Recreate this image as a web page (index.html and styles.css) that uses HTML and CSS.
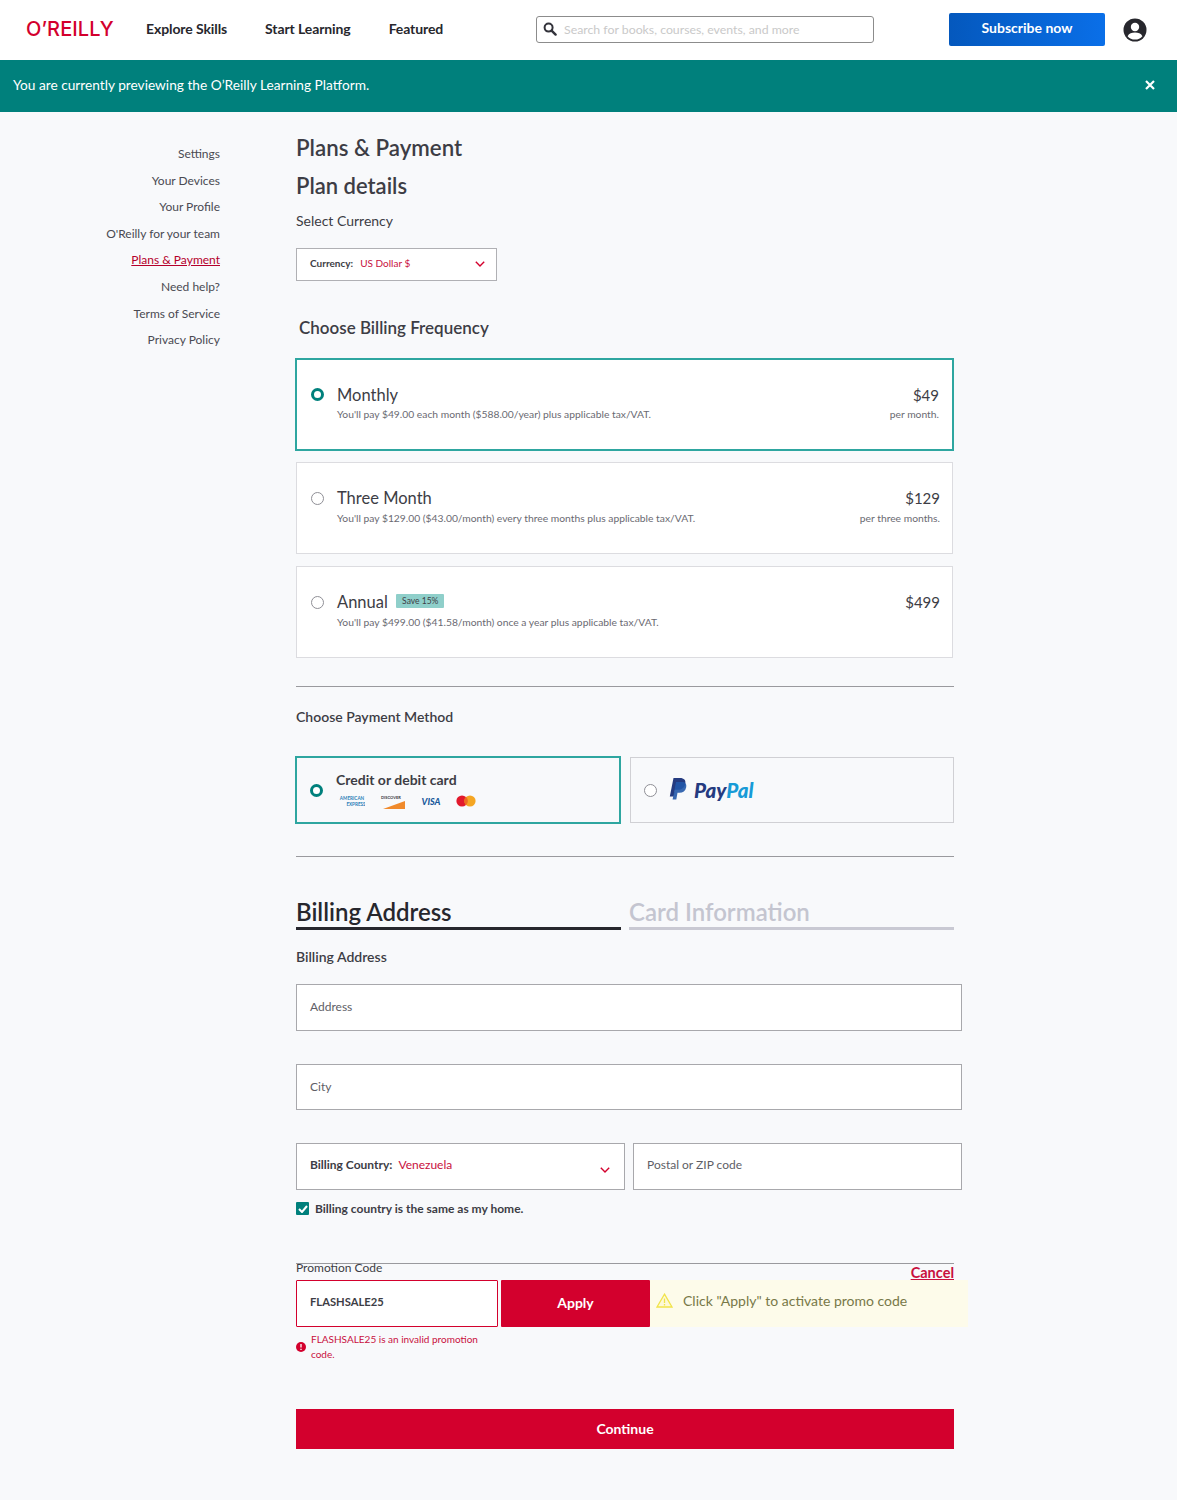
FILE: index.html
```html
<!DOCTYPE html>
<html lang="en">
<head>
    <meta charset="UTF-8">
    <meta name="viewport" content="width=device-width, initial-scale=1.0">
    <title>Plans &amp; Payment</title>
    <link rel="stylesheet" href="styles.css">
</head>
<body>
    <header class="topbar">
        <a class="logo">O’REILLY</a>
        <nav class="topnav">
            <a>Explore Skills</a>
            <a>Start Learning</a>
            <a>Featured</a>
        </nav>
        <div class="search">
            <svg width="14" height="14" viewBox="0 0 14 14"><circle cx="5.6" cy="5.6" r="4" fill="none" stroke="#33333b" stroke-width="2"/><path d="M8.6 8.6l4 4" stroke="#33333b" stroke-width="2.4" stroke-linecap="round"/></svg>
            <span>Search for books, courses, events, and more</span>
        </div>
        <button class="subscribe">Subscribe now</button>
        <svg class="avatar" width="24" height="24" viewBox="0 0 24 24"><circle cx="12" cy="12" r="11.5" fill="#27272d"/><circle cx="12" cy="9" r="4.2" fill="#fff"/><path d="M4.6 18.2c1.6-2.8 4-3.6 7.4-3.6s5.800.8 7.400 3.600c-1.800 2.200-4.400 3.400-7.400 3.400s-5.600-1.200-7.400-3.400z" fill="#fff"/></svg>
    </header>

    <div class="banner">
        <span>You are currently previewing the O’Reilly Learning Platform.</span>
        <svg class="banner-close" width="10" height="10" viewBox="0 0 10 10"><path d="M1 1l8 8M9 1l-8 8" stroke="#fff" stroke-width="2.200"/></svg>
    </div>

    <div class="layout">
        <aside class="sidenav">
            <a>Settings</a>
            <a>Your Devices</a>
            <a>Your Profile</a>
            <a>O'Reilly for your team</a>
            <a class="current">Plans &amp; Payment</a>
            <a>Need help?</a>
            <a>Terms of Service</a>
            <a>Privacy Policy</a>
        </aside>

        <main class="content">
            <h1>Plans &amp; Payment</h1>
            <h2>Plan details</h2>
            <p class="label currency-label">Select Currency</p>
            <div class="select currency-select">
                <b>Currency:</b><span class="red">US Dollar $</span>
                <svg class="chev" width="10" height="6" viewBox="0 0 10 6"><path d="M.8.8L5 5l4.200-4.200" fill="none" stroke="#d3002d" stroke-width="1.400"/></svg>
            </div>

            <h3 class="freq-title">Choose Billing Frequency</h3>

            <div class="plan selected">
                <i class="radio on"></i>
                <div class="plan-info">
                    <div class="plan-name">Monthly</div>
                    <div class="plan-desc">You'll pay $49.00 each month ($588.00/year) plus applicable tax/VAT.</div>
                </div>
                <div class="plan-price">$49<small>per month.</small></div>
            </div>
            <div class="plan">
                <i class="radio"></i>
                <div class="plan-info">
                    <div class="plan-name">Three Month</div>
                    <div class="plan-desc">You'll pay $129.00 ($43.00/month) every three months plus applicable tax/VAT.</div>
                </div>
                <div class="plan-price">$129<small>per three months.</small></div>
            </div>
            <div class="plan">
                <i class="radio"></i>
                <div class="plan-info">
                    <div class="plan-name">Annual <span class="save">Save 15%</span></div>
                    <div class="plan-desc">You'll pay $499.00 ($41.58/month) once a year plus applicable tax/VAT.</div>
                </div>
                <div class="plan-price">$499</div>
            </div>

            <hr class="rule rule-one">
            <p class="label method-label">Choose Payment Method</p>

            <div class="methods">
                <div class="method selected">
                    <i class="radio on"></i>
                    <div>
                        <div class="method-name">Credit or debit card</div>
                        <div class="cards">
                            <svg width="26" height="10" viewBox="0 0 26 10"><text x="13" y="4" text-anchor="middle" class="amex">AMERICAN</text><text x="17" y="9.500" text-anchor="middle" class="amex">EXPRESS</text></svg>
                            <svg width="26" height="16" viewBox="0 0 26 16"><text x="1" y="6" class="disc">DISCOVER</text><path d="M3 16L25 8v8z" fill="#f08a2c"/></svg>
                            <svg width="20" height="10" viewBox="0 0 20 10"><text x="10" y="8.500" text-anchor="middle" class="visa">VISA</text></svg>
                            <svg width="20" height="12" viewBox="0 0 20 12"><circle cx="6" cy="6" r="5.600" fill="#e2192c"/><circle cx="14" cy="6" r="5.600" fill="#f5a623"/><path d="M10 1.800a5.600 5.600 0 0 1 0 8.400a5.600 5.600 0 0 1 0-8.400z" fill="#ee6a20"/></svg>
                        </div>
                    </div>
                </div>
                <div class="method">
                    <i class="radio"></i>
                    <svg class="pp-mark" width="18" height="22" viewBox="0 0 18 22"><path d="M4.500 0h6.500c4 0 6 2.200 5.300 5.700-.8 4-3.600 6-7.500 6H6L4.700 18.500H.8z" fill="#253b80"/><path d="M7 4h5.800c3.600 0 5 2 4.400 5.200-.7 3.700-3.300 5.500-6.800 5.500H8.500L7.300 21.500H3.600z" fill="#2258a8" opacity=".9"/></svg>
                    <span class="pp-text">Pay<em>Pal</em></span>
                </div>
            </div>

            <hr class="rule rule-two">

            <div class="tabs">
                <div class="tab active">Billing Address</div>
                <div class="tab">Card Information</div>
            </div>

            <p class="label address-label">Billing Address</p>

            <div class="fields">
                <div class="field">Address</div>
                <div class="field field-city">City</div>
                <div class="field-row">
                    <div class="field country">
                        <b>Billing Country:</b><span class="red">Venezuela</span>
                        <svg class="chev low" width="10" height="6" viewBox="0 0 10 6"><path d="M.8.8L5 5l4.200-4.200" fill="none" stroke="#d3002d" stroke-width="1.400"/></svg>
                    </div>
                    <div class="field postal">Postal or ZIP code</div>
                </div>
            </div>

            <label class="same-home">
                <span class="check"><svg width="10" height="8" viewBox="0 0 10 8"><path d="M1 4l3 3 5-6" fill="none" stroke="#fff" stroke-width="2"/></svg></span>
                Billing country is the same as my home.
            </label>

            <section class="promo">
                <div class="promo-head">
                    <span>Promotion Code</span>
                    <a class="cancel">Cancel</a>
                </div>
                <div class="promo-row">
                    <div class="promo-input">FLASHSALE25</div>
                    <button class="apply">Apply</button>
                    <div class="promo-note">
                        <svg width="17" height="15" viewBox="0 0 17 15"><path d="M8.500 1.200L16 14H1z" fill="#fdf9d8" stroke="#f1e34a" stroke-width="1.300"/><path d="M8.500 5.500v4.500M8.500 11v1.500" stroke="#f1e34a" stroke-width="1.300"/></svg>
                        <span>Click "Apply" to activate promo code</span>
                    </div>
                </div>
                <div class="promo-error">
                    <svg width="10" height="10" viewBox="0 0 10 10"><circle cx="5" cy="5" r="5" fill="#d3002d"/><path d="M5 2v3.500M5 6.800v1.200" stroke="#fff" stroke-width="1.300"/></svg>
                    <span>FLASHSALE25 is an invalid promotion code.</span>
                </div>
            </section>

            <button class="continue">Continue</button>
        </main>
    </div>
</body>
</html>
```

FILE: styles.css
```css
* {
    box-sizing: border-box;
}

body {
    margin: 0;
    background-color: #f8f9fb;
    color: #3d3d45;
    font-family: Lato, "Noto Sans", sans-serif;
    font-size: 14px;
    min-height: 1500px;
}

p, h1, h2, h3 {
    margin: 0;
}

/* top bar */
.topbar {
    height: 60px;
    background-color: #fff;
    display: flex;
    align-items: center;
    padding-left: 26px;
}

.logo {
    width: 120px;
    padding-bottom: 2px;
    color: #d3002d;
    font-family: Inter, sans-serif;
    font-size: 20px;
    font-weight: 500;
    letter-spacing: 0.1px;
}

.topnav {
    display: flex;
    gap: 38px;
    width: 390px;
    padding-bottom: 3px;
    font-weight: 700;
    font-size: 14px;
    letter-spacing: -0.1px;
    color: #27272d;
}

.search {
    width: 338px;
    height: 27px;
    margin-top: -2px;
    border: 1px solid #8c8c8c;
    border-radius: 3px;
    display: flex;
    align-items: center;
    gap: 7px;
    padding-left: 6px;
    font-size: 12.3px;
    color: #c9c9c9;
}

.subscribe {
    width: 156px;
    height: 33px;
    margin-left: 75px;
    margin-top: -2px;
    padding-bottom: 5px;
    border: 0;
    border-radius: 2px;
    background: linear-gradient(90deg, #0458bd, #0a6fe8);
    color: #fff;
    font-family: inherit;
    font-size: 14px;
    font-weight: 700;
}

.avatar {
    margin-left: 18px;
}

.banner {
    height: 52px;
    background-color: #00807c;
    color: #fff;
    display: flex;
    align-items: center;
    justify-content: space-between;
    padding: 0 22px 3px 13px;
    font-size: 13.7px;
}

/* page layout */
.layout {
    display: flex;
}

.sidenav {
    width: 220px;
    padding-top: 29px;
    display: flex;
    flex-direction: column;
    align-items: flex-end;
    font-size: 12px;
    line-height: 26.6px;
    color: #4a4a52;
}

.current {
    color: #b5002b;
    text-decoration: underline;
}

.content {
    width: 658px;
    margin-left: 76px;
    padding-top: 21px;
}

h1 {
    font-size: 22.3px;
    line-height: 29px;
    font-weight: 600;
}

h2 {
    font-size: 22px;
    line-height: 29px;
    font-weight: 600;
    margin-top: 9px;
}

.label {
    font-size: 14px;
    line-height: 18px;
}

.currency-label {
    margin-top: 12px;
}

.select {
    position: relative;
    display: flex;
    align-items: center;
    width: 201px;
    height: 33px;
    margin-top: 18px;
    padding: 0 0 3px 13px;
    background-color: #fff;
    border: 1px solid #b0b0b4;
    font-size: 10px;
}

.select b {
    margin-right: 7px;
}

.red {
    color: #c8103e;
}

.chev {
    position: absolute;
    right: 11px;
    top: 12px;
}

.freq-title {
    margin: 37px 0 0 3px;
    font-size: 17px;
    line-height: 20px;
    font-weight: 600;
}

/* plan cards */
.plan {
    display: flex;
    width: 657px;
    height: 92px;
    margin-bottom: 12px;
    padding: 27px 12px 0 14px;
    background-color: #fff;
    border: 1px solid #dcdce0;
}

.plan .radio {
    margin-top: 2px;
}

.plan.selected {
    height: 93px;
    margin: 20px 0 11px -1px;
    width: 659px;
    padding: 27px 13px 0 14px;
    border: 2px solid #2ea6a0;
}

.plan.selected .radio {
    margin-top: 1px;
}

.radio {
    flex: none;
    width: 13px;
    height: 13px;
    border: 1px solid #8f8f96;
    border-radius: 50%;
    background-color: #fff;
}

.radio.on {
    border: 3px solid #00807c;
}

.plan-info {
    flex: 1;
    margin-left: 13px;
}

.plan-name {
    height: 20px;
    font-size: 16.5px;
    line-height: 20px;
    margin-top: -2px;
}

.plan-desc {
    margin-top: 4px;
    font-size: 10.3px;
    line-height: 13px;
    color: #6a6a72;
}

.plan-price {
    text-align: right;
    font-size: 15px;
    line-height: 20px;
    margin-top: -2px;
}

.plan-price small {
    display: block;
    margin-top: 4px;
    font-size: 10.3px;
    line-height: 13px;
    color: #6a6a72;
}

.plan.selected .plan-desc,
.plan.selected small {
    margin-top: 3px;
}

.save {
    display: inline-block;
    height: 14px;
    margin-left: 4px;
    padding: 0 6px;
    vertical-align: 4px;
    border-radius: 1px;
    background-color: #8fcfca;
    font-size: 8.5px;
    line-height: 14px;
}

.rule {
    margin: 0;
    border: 0;
    border-top: 1px solid #9a9a9e;
}

.rule-one {
    margin-top: 28px;
}

.method-label {
    margin-top: 21px;
    font-weight: 600;
}

/* payment methods */
.methods {
    display: flex;
    gap: 9px;
    margin-top: 30px;
    align-items: center;
}

.method {
    display: flex;
    align-items: center;
    width: 324px;
    height: 66px;
    padding-left: 13px;
    border: 1px solid #d0d0d4;
}

.method.selected {
    flex: none;
    width: 326px;
    height: 68px;
    margin-left: -1px;
    border: 2px solid #2ea6a0;
}

.method-name {
    margin-left: 13px;
    font-size: 14px;
    font-weight: 700;
}

.cards {
    display: flex;
    align-items: center;
    gap: 15px;
    margin: 5px 0 0 16px;
}

.amex {
    font: 700 4.6px Lato, sans-serif;
    fill: #2a7fb8;
}

.disc {
    font: 700 4px Lato, sans-serif;
    fill: #33333b;
}

.visa {
    font: italic 900 9px Lato, sans-serif;
    fill: #1a5a9c;
}

.pp-mark {
    margin-left: 12px;
    margin-top: -2px;
}

.pp-text {
    margin-left: 7px;
    font-size: 20.5px;
    font-weight: 900;
    font-style: italic;
    color: #253b80;
}

.pp-text em {
    color: #179bd7;
}

.rule-two {
    margin-top: 32px;
}

/* tabs */
.tabs {
    display: flex;
    gap: 8px;
    margin-top: 42px;
}

.tab {
    flex: 1;
    height: 31px;
    border-bottom: 3px solid #c9c9d3;
    color: #c4c5d0;
    font-size: 24px;
    line-height: 25px;
    font-weight: 600;
}

.tab.active {
    border-bottom-color: #27272d;
    color: #27272d;
}

.address-label {
    margin-top: 18px;
    font-weight: 600;
}

/* address fields */
.fields {
    display: flex;
    flex-direction: column;
    gap: 33px;
    width: 666px;
    margin-top: 18px;
}

.field {
    display: flex;
    align-items: center;
    height: 47px;
    padding: 0 0 2px 13px;
    background-color: #fff;
    border: 1px solid #a8a8ac;
    font-size: 12px;
    color: #5e5e66;
}

.field-city {
    height: 46px;
}

.field-row {
    display: flex;
    gap: 8px;
}

.country {
    position: relative;
    width: 329px;
    padding-bottom: 4px;
}

.postal {
    flex: 1;
    padding-bottom: 4px;
}

.country b {
    margin-right: 6px;
    color: #3d3d45;
}

.chev.low {
    right: 14px;
    top: 23px;
}

.same-home {
    display: flex;
    align-items: center;
    gap: 6px;
    height: 15px;
    margin-top: 11px;
    margin-bottom: -1px;
    font-size: 12px;
    font-weight: 700;
}

.check {
    display: flex;
    align-items: center;
    justify-content: center;
    width: 13px;
    height: 13px;
    border-radius: 1px;
    background-color: #00807c;
}

/* promo code */
.promo {
    margin-top: 48px;
    border-top: 1px solid #9a9a9e;
}

.promo-head {
    display: flex;
    justify-content: space-between;
    height: 16px;
    font-size: 12px;
    line-height: 8px;
}

.cancel {
    padding-top: 4px;
    color: #c8103e;
    font-size: 14.5px;
    line-height: 10px;
    font-weight: 700;
    text-decoration: underline;
}

.promo-row {
    display: flex;
    height: 47px;
}

.promo-input {
    flex: none;
    display: flex;
    align-items: center;
    width: 202px;
    padding: 0 0 4px 13px;
    background-color: #fff;
    border: 1px solid #d3002d;
    border-radius: 1px;
    font-size: 11.2px;
    font-weight: 700;
}

.apply {
    flex: none;
    width: 149px;
    margin-left: 3px;
    padding-bottom: 4px;
    border: 0;
    border-radius: 1px;
    background-color: #d3002d;
    color: #fff;
    font-family: inherit;
    font-size: 14px;
    font-weight: 700;
}

.promo-note {
    display: flex;
    align-items: center;
    flex: none;
    width: 318px;
    padding: 0 0 7px 6px;
    background-color: #fdfbea;
    color: #787848;
    font-size: 14px;
}

.promo-note span {
    margin-left: 10px;
}

.promo-error {
    display: flex;
    align-items: center;
    gap: 5px;
    width: 200px;
    margin-top: 5px;
    color: #c8103e;
    font-size: 10px;
    line-height: 15px;
}

.promo-error svg {
    flex: none;
}

.continue {
    display: block;
    width: 658px;
    height: 40px;
    margin-top: 47px;
    padding-bottom: 2px;
    border: 0;
    background-color: #d3002d;
    color: #fff;
    font-family: inherit;
    font-size: 14px;
    font-weight: 700;
}
```
